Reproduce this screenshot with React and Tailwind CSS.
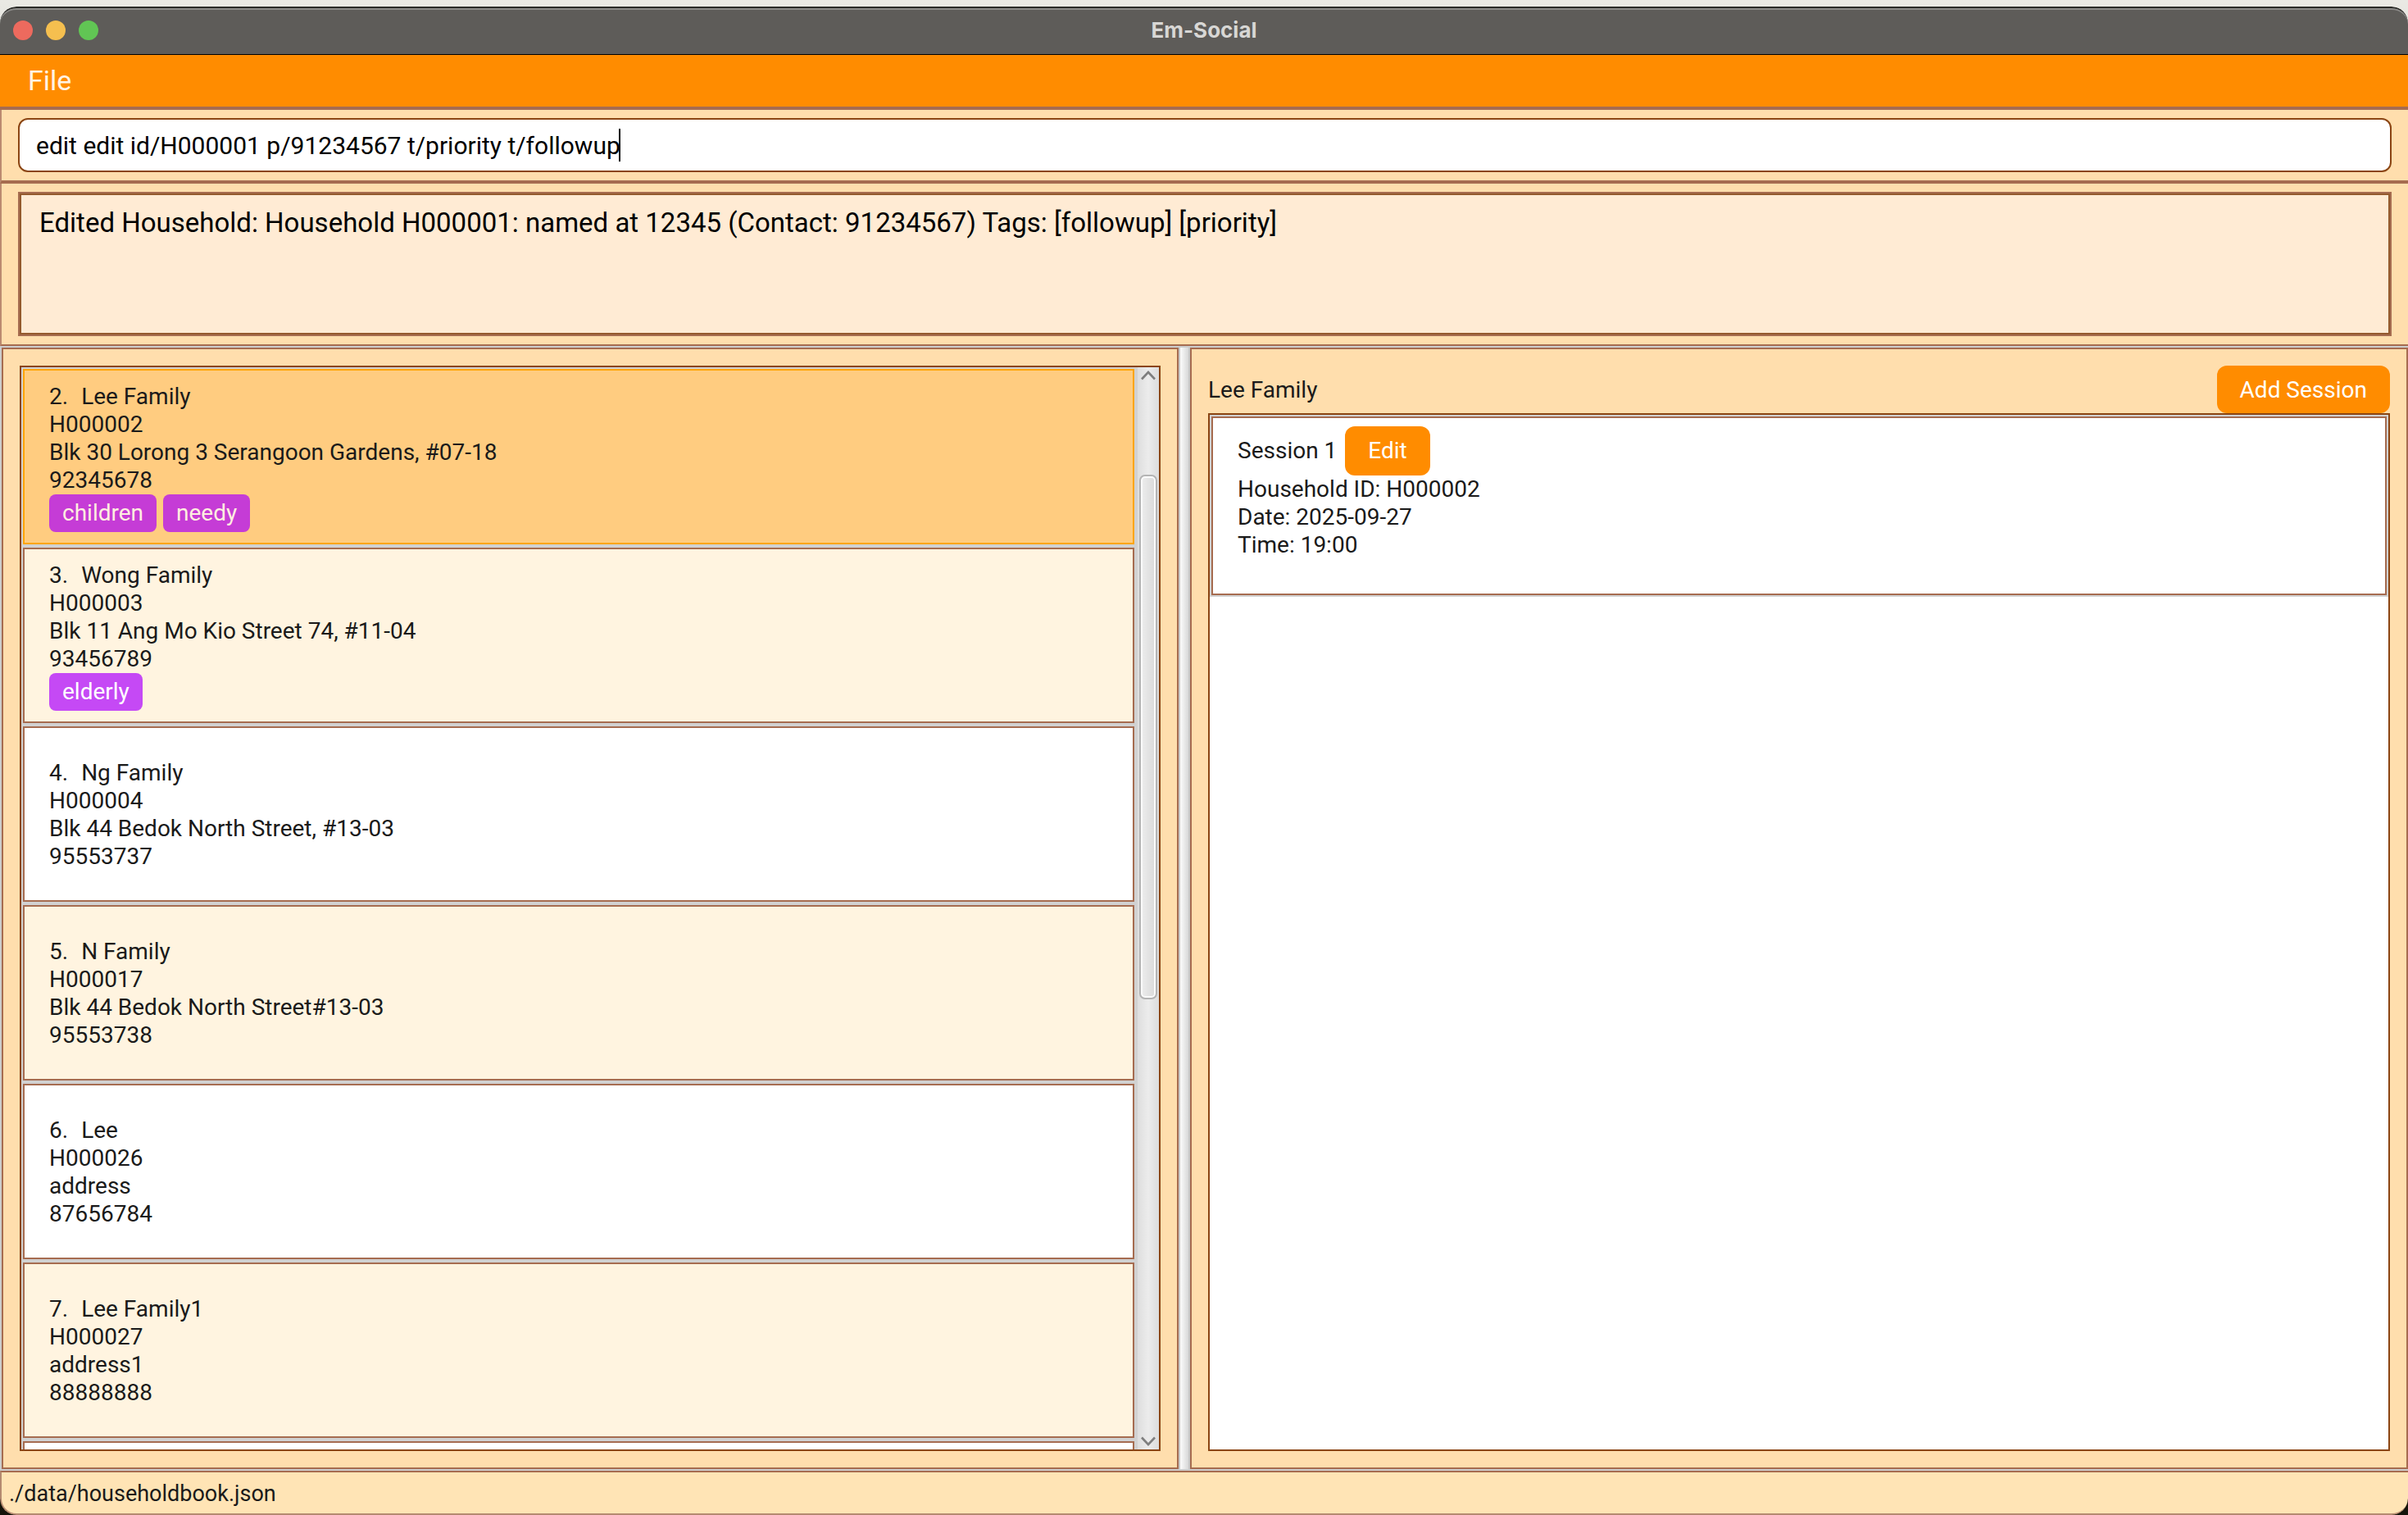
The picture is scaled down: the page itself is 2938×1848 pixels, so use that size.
import { useLayoutEffect, useRef, useState } from "react";

const households = [
  { n: 2, name: "Lee Family", id: "H000002", address: "Blk 30 Lorong 3 Serangoon Gardens, #07-18", phone: "92345678", tags: ["children", "needy"], selected: true },
  { n: 3, name: "Wong Family", id: "H000003", address: "Blk 11 Ang Mo Kio Street 74, #11-04", phone: "93456789", tags: ["elderly"] },
  { n: 4, name: "Ng Family", id: "H000004", address: "Blk 44 Bedok North Street, #13-03", phone: "95553737", tags: [] },
  { n: 5, name: "N Family", id: "H000017", address: "Blk 44 Bedok North Street#13-03", phone: "95553738", tags: [] },
  { n: 6, name: "Lee", id: "H000026", address: "address", phone: "87656784", tags: [] },
  { n: 7, name: "Lee Family1", id: "H000027", address: "address1", phone: "88888888", tags: [] },
];

const scroll = { before: 109, thumb: 638, after: 529 };

function TitleBar() {
  return (
    <header className="grid h-[59px] shrink-0 grid-cols-[1fr_auto_1fr] items-center rounded-t-[20px] border-t-2 border-b border-t-[#2a2a28] border-b-black bg-[#5e5c59] px-4 pb-[2px] shadow-[inset_0_2px_0_#8b8a88]">
      <div className="flex gap-4">
        <button aria-label="Close" className="size-6 rounded-full bg-[#ed6a5e]" />
        <button aria-label="Minimize" className="size-6 rounded-full bg-[#f5bf4f]" />
        <button aria-label="Zoom" className="size-6 rounded-full bg-[#61c554]" />
      </div>
      <h1 className="font-['Inter',sans-serif] text-[26px] leading-8 font-bold text-[#d8d7d5]">Em-Social</h1>
    </header>
  );
}

function CommandBox() {
  const [value, setValue] = useState("edit edit id/H000001 p/91234567 t/priority t/followup");
  const [caret, setCaret] = useState(0);
  const input = useRef(null);

  useLayoutEffect(() => {
    const style = getComputedStyle(input.current);
    const ctx = document.createElement("canvas").getContext("2d");
    ctx.font = `${style.fontSize} ${style.fontFamily}`;
    setCaret(Math.round(ctx.measureText(value).width + parseFloat(style.paddingLeft)));
  }, [value]);

  return (
    <div className="border-b-4 border-l-2 border-b-[#a66c50] border-l-[#bb8a70] bg-[#ffdead] p-[10px_20px]">
      <div className="relative">
        <input
          ref={input}
          aria-label="Command"
          value={value}
          onChange={(e) => setValue(e.target.value)}
          className="block h-[66px] w-full rounded-[12px] border-2 border-[#8b4513] bg-white px-[20px] text-[30px] leading-9 text-black caret-transparent outline-none"
        />
        <span className="pointer-events-none absolute top-[13px] h-10 w-[2px] bg-black" style={{ left: caret }} />
      </div>
    </div>
  );
}

function ResultBox() {
  return (
    <div className="border-b-2 border-l-2 border-b-[#a66c50] border-l-[#bb8a70] bg-[#ffdead] p-[10px_20px]">
      <div className="border-2 border-[#a66c50]">
        <textarea
          readOnly
          aria-label="Result"
          value="Edited Household: Household H000001: named at 12345 (Contact: 91234567) Tags: [followup] [priority]"
          className="block h-[172px] w-full resize-none border-2 border-[#945a2e] bg-[#ffebd4] px-[22px] py-[14px] text-[33px] leading-10 text-black outline-none"
        />
      </div>
    </div>
  );
}

function HouseholdCard({ h }) {
  return (
    <li
      className={
        "flex h-[214px] shrink-0 flex-col justify-center border-2 px-[30px] pt-[2px] " +
        (h.selected ? "border-[#ffa500] bg-[#ffcc80]" : "border-[#a66c50] odd:bg-white even:bg-[#fff4e0]")
      }
    >
      <div className="flex gap-4">
        <span>{h.n}.</span>
        <span>{h.name}</span>
      </div>
      <p>{h.id}</p>
      <p>{h.address}</p>
      <p>{h.phone}</p>
      {h.tags.length > 0 && (
        <div className="flex gap-2">
          {h.tags.map((t) => (
            <span
              key={t}
              className={
                "flex h-[46px] items-center rounded-[8px] px-4 " +
                (h.selected ? "bg-[#c53cd6] text-[#ffeee0]" : "bg-[#c549f5] text-white")
              }
            >
              {t}
            </span>
          ))}
        </div>
      )}
    </li>
  );
}

function ScrollBar() {
  return (
    <div className="flex w-7 shrink-0 flex-col items-center border-l-2 border-[#d2d2d2] bg-linear-to-r from-[#dedede] via-[#ececec] to-[#dcdcdc]">
      <button aria-label="Scroll up" className="flex h-[22px] items-center justify-center pb-[2px]">
        <svg width="20" height="12" viewBox="0 0 20 12" fill="none" stroke="#7f7f7f" strokeWidth="2.6">
          <path d="M2 10.5 10 2l8 8.5" />
        </svg>
      </button>
      <div className="flex w-[22px] flex-1 flex-col">
        <div className="basis-0" style={{ flexGrow: scroll.before }} />
        <div
          className="basis-0 rounded-[7px] border-2 border-[#b4b4b4] bg-linear-to-r from-[#ededed] to-[#dadada] shadow-[inset_0_0_0_2px_#fafafa]"
          style={{ flexGrow: scroll.thumb }}
        />
        <div className="basis-0" style={{ flexGrow: scroll.after }} />
      </div>
      <button aria-label="Scroll down" className="flex h-[22px] items-center justify-center pt-[2px]">
        <svg width="20" height="12" viewBox="0 0 20 12" fill="none" stroke="#7f7f7f" strokeWidth="2.6">
          <path d="M2 1.500 10 10l8-8.500" />
        </svg>
      </button>
    </div>
  );
}

function HouseholdPanel() {
  return (
    <section className="flex min-w-0 flex-[1392_1_0%] border-2 border-[#a66c50] bg-[#ffdead] p-5">
      <div className="flex min-h-0 min-w-0 flex-1 border-2 border-[#8b4513]">
        <ul className="flex min-w-0 flex-1 flex-col gap-1 overflow-hidden bg-[#d1d1d1] px-[2px] pt-[2px]">
          {households.map((h) => (
            <HouseholdCard key={h.id} h={h} />
          ))}
          <li className="h-[214px] shrink-0 border-2 border-[#a66c50] bg-white" />
        </ul>
        <ScrollBar />
      </div>
    </section>
  );
}

function SessionPanel() {
  return (
    <section className="flex min-w-0 flex-[1442_1_0%] flex-col border-2 border-[#a66c50] bg-[#ffdead] p-5">
      <div className="flex items-center justify-between">
        <h2 className="pt-[2px]">Lee Family</h2>
        <button className="h-[58px] rounded-[12px] bg-[#ff8c00] px-7 pt-[2px] text-white">Add Session</button>
      </div>
      <ul className="min-h-0 flex-1 border-2 border-[#8b4513] bg-white">
        <li className="border-2 border-[#d1d1d1]">
          <div className="h-[218px] border-2 border-[#a66c50] bg-white px-[30px] py-[10px]">
            <div className="flex items-center gap-[10px]">
              <span>Session 1</span>
              <button className="h-[60px] rounded-[12px] bg-[#ff8c00] px-7 text-white">Edit</button>
            </div>
            <p>Household ID: H000002</p>
            <p>Date: 2025-09-27</p>
            <p>Time: 19:00</p>
          </div>
        </li>
      </ul>
    </section>
  );
}

export default function App() {
  return (
    <div className="flex h-screen flex-col bg-linear-to-b from-[#eae9e4] to-[#14140a] pt-2 font-['Roboto',sans-serif] text-[28px] leading-[34px] text-[#1a1a1a]">
      <div className="flex min-h-0 flex-1 flex-col overflow-hidden rounded-[20px]">
        <TitleBar />
        <nav className="flex h-[67px] shrink-0 items-center border-b-4 border-[#a66c50] bg-[#ff8c00] px-[34px] pb-[2px]">
          <button className="text-[34px] leading-10 text-[#fff3e4]">File</button>
        </nav>
        <CommandBox />
        <ResultBox />
        <main className="flex min-h-0 flex-1 bg-[#cccccc] py-[2px] pl-[2px]">
          <HouseholdPanel />
          <div className="w-[14px] shrink-0 border-x-2 border-[#c8c8c8] bg-linear-to-r from-[#fcfcfc] to-[#d8d8d8]" />
          <SessionPanel />
        </main>
        <footer className="flex h-[54px] shrink-0 items-center rounded-b-[20px] border-y-2 border-l-2 border-t-[#a66c50] border-b-[#b48a70] border-l-[#b48a70] bg-[#ffe4b5] px-[9px] pt-[2px] text-[27px]">
          ./data/householdbook.json
        </footer>
      </div>
    </div>
  );
}
